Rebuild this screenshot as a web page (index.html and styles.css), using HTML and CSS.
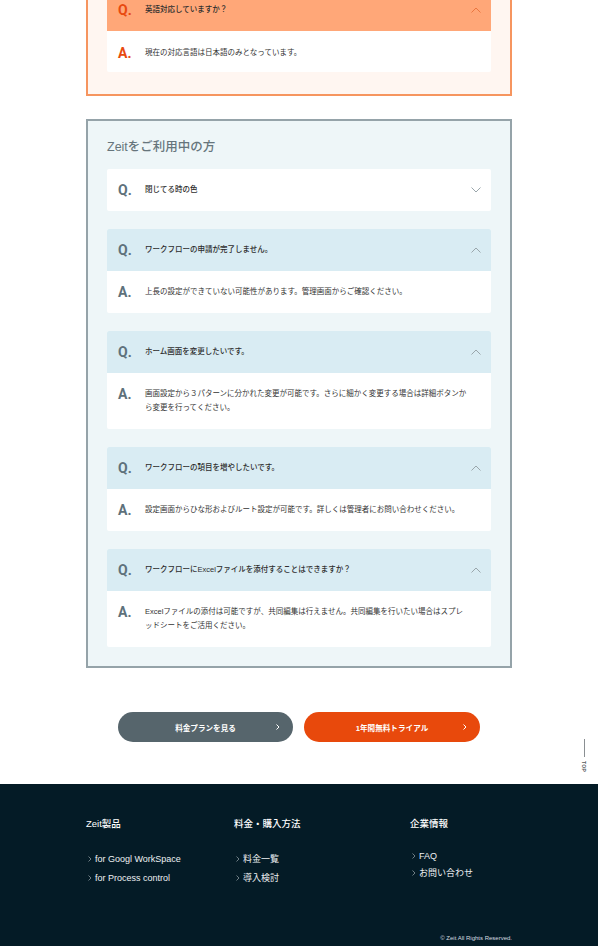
FILE: index.html
```html
<!DOCTYPE html>
<html lang="ja">
<head>
<meta charset="utf-8">
<title>FAQ</title>
<link rel="stylesheet" href="styles.css">
</head>
<body>
<main class="page">
  <section class="faq faq--orange">
    <div class="qa qa--open">
      <div class="qa__q">
        <span class="qa__mark">Q.</span>
        <span class="qa__text">英語対応していますか？</span>
        <svg class="qa__chev" width="10" height="6" viewBox="0 0 10 6"><polyline points="0.5,5.5 5,1 9.5,5.5"/></svg>
      </div>
      <div class="qa__a">
        <span class="qa__mark">A.</span>
        <p class="qa__text">現在の対応言語は日本語のみとなっています。</p>
      </div>
    </div>
  </section>

  <section class="faq faq--blue">
    <h2 class="faq__title">Zeitをご利用中の方</h2>
    <div class="faq__list">
      <div class="qa">
        <div class="qa__q">
          <span class="qa__mark">Q.</span>
          <span class="qa__text">閉じてる時の色</span>
          <svg class="qa__chev" width="10" height="6" viewBox="0 0 10 6"><polyline points="0.5,0.5 5,5 9.5,0.5"/></svg>
        </div>
      </div>
      <div class="qa qa--open">
        <div class="qa__q">
          <span class="qa__mark">Q.</span>
          <span class="qa__text">ワークフローの申請が完了しません。</span>
          <svg class="qa__chev" width="10" height="6" viewBox="0 0 10 6"><polyline points="0.5,5.5 5,1 9.5,5.5"/></svg>
        </div>
        <div class="qa__a">
          <span class="qa__mark">A.</span>
          <p class="qa__text">上長の設定ができていない可能性があります。管理画面からご確認ください。</p>
        </div>
      </div>
      <div class="qa qa--open">
        <div class="qa__q">
          <span class="qa__mark">Q.</span>
          <span class="qa__text">ホーム画面を変更したいです。</span>
          <svg class="qa__chev" width="10" height="6" viewBox="0 0 10 6"><polyline points="0.5,5.5 5,1 9.5,5.5"/></svg>
        </div>
        <div class="qa__a">
          <span class="qa__mark">A.</span>
          <p class="qa__text">画面設定から３パターンに分かれた変更が可能です。さらに細かく変更する場合は詳細ボタンから変更を行ってください。</p>
        </div>
      </div>
      <div class="qa qa--open">
        <div class="qa__q">
          <span class="qa__mark">Q.</span>
          <span class="qa__text">ワークフローの項目を増やしたいです。</span>
          <svg class="qa__chev" width="10" height="6" viewBox="0 0 10 6"><polyline points="0.5,5.5 5,1 9.5,5.5"/></svg>
        </div>
        <div class="qa__a">
          <span class="qa__mark">A.</span>
          <p class="qa__text">設定画面からひな形およびルート設定が可能です。詳しくは管理者にお問い合わせください。</p>
        </div>
      </div>
      <div class="qa qa--open">
        <div class="qa__q">
          <span class="qa__mark">Q.</span>
          <span class="qa__text">ワークフローにExcelファイルを添付することはできますか？</span>
          <svg class="qa__chev" width="10" height="6" viewBox="0 0 10 6"><polyline points="0.5,5.5 5,1 9.5,5.5"/></svg>
        </div>
        <div class="qa__a">
          <span class="qa__mark">A.</span>
          <p class="qa__text">Excelファイルの添付は可能ですが、共同編集は行えません。共同編集を行いたい場合はスプレッドシートをご活用ください。</p>
        </div>
      </div>
    </div>
  </section>

  <div class="cta">
    <a class="btn btn--gray" href="#">料金プランを見る<svg class="btn__chev" width="4" height="6" viewBox="0 0 4 6"><polyline points="0.5,0.5 3,3 0.5,5.5"/></svg></a>
    <a class="btn btn--orange" href="#">1年間無料トライアル<svg class="btn__chev" width="4" height="6" viewBox="0 0 4 6"><polyline points="0.5,0.5 3,3 0.5,5.5"/></svg></a>
    <a class="pagetop" href="#"><span class="pagetop__line"></span><span class="pagetop__text">TOP</span></a>
  </div>
</main>

<footer class="footer">
  <div class="footer__inner">
    <div class="footer__grid">
      <div class="footer__col">
        <h3 class="footer__heading">Zeit製品</h3>
        <ul class="footer__list">
          <li><a class="footer__link" href="#"><svg class="footer__chev" width="4" height="6" viewBox="0 0 4 6"><polyline points="0.5,0.5 3,3 0.5,5.5"/></svg>for Googl WorkSpace</a></li>
          <li><a class="footer__link" href="#"><svg class="footer__chev" width="4" height="6" viewBox="0 0 4 6"><polyline points="0.5,0.5 3,3 0.5,5.5"/></svg>for Process control</a></li>
        </ul>
      </div>
      <div class="footer__col">
        <h3 class="footer__heading">料金・購入方法</h3>
        <ul class="footer__list">
          <li><a class="footer__link" href="#"><svg class="footer__chev" width="4" height="6" viewBox="0 0 4 6"><polyline points="0.5,0.5 3,3 0.5,5.5"/></svg>料金一覧</a></li>
          <li><a class="footer__link" href="#"><svg class="footer__chev" width="4" height="6" viewBox="0 0 4 6"><polyline points="0.5,0.5 3,3 0.5,5.5"/></svg>導入検討</a></li>
        </ul>
      </div>
      <div class="footer__col">
        <h3 class="footer__heading">企業情報</h3>
        <ul class="footer__list footer__list--tight">
          <li><a class="footer__link" href="#"><svg class="footer__chev" width="4" height="6" viewBox="0 0 4 6"><polyline points="0.5,0.5 3,3 0.5,5.5"/></svg>FAQ</a></li>
          <li><a class="footer__link" href="#"><svg class="footer__chev" width="4" height="6" viewBox="0 0 4 6"><polyline points="0.5,0.5 3,3 0.5,5.5"/></svg>お問い合わせ</a></li>
        </ul>
      </div>
    </div>
    <p class="footer__copy">© Zeit All Rights Reserved.</p>
  </div>
</footer>
</body>
</html>
```

FILE: styles.css
```css
* { box-sizing: border-box; }

html { background: #ffffff; }

body {
  margin: 0;
  font-family: "Liberation Sans", "Noto Sans CJK JP", sans-serif;
  color: #333333;
  background: #ffffff;
}

a { text-decoration: none; color: inherit; }

.page {
  width: 426px;
  margin: 0 auto;
}

/* FAQ boxes */
.faq {
  border: 2px solid;
  padding: 0 19px 19px;
}

.faq--orange {
  margin-top: -13px;
  border-color: #f6955f;
  background: #fff6f1;
  padding-bottom: 22px;
}

.faq--blue {
  margin-top: 23px;
  border-color: #95a3a9;
  background: #eef6f8;
}

.faq__title {
  margin: 0 0 13px;
  padding-top: 17px;
  font-size: 12.5px;
  line-height: 18px;
  font-weight: 500;
  color: #66757c;
}

.faq__list {
  display: flex;
  flex-direction: column;
  gap: 18px;
}

.qa {
  background: #ffffff;
  border-radius: 2px;
  overflow: hidden;
}

.qa__q {
  display: flex;
  align-items: center;
  height: 42px;
  padding: 0 10px 0 11px;
}

.faq--blue .qa--open .qa__q { background: #d9ecf3; }
.faq--orange .qa__q { background: #ffa778; }

.qa__a {
  display: flex;
  align-items: flex-start;
  padding: 14px 22px 14px 11px;
}

.faq--orange .qa__a { padding-top: 15px; padding-bottom: 12px; }

.qa__mark {
  flex: none;
  width: 27px;
  font-family: "Liberation Sans Narrow", Roboto, "Liberation Sans", sans-serif;
  font-weight: 700;
  font-size: 14px;
  line-height: 14px;
  color: #5e717b;
}

.faq--orange .qa__mark { color: #e84a10; }

.qa__text {
  flex: 1;
  margin: 0;
  font-size: 7.5px;
  line-height: 14px;
  color: #333333;
  line-break: loose;
}

.qa__q .qa__text { font-weight: 500; color: #2e2e2e; }

.qa__chev {
  flex: none;
  fill: none;
  stroke: #9aa6ab;
  stroke-width: 1;
}

.faq--orange .qa__chev { stroke: #ea7640; }

/* CTA */
.cta {
  position: relative;
  display: flex;
  justify-content: center;
  gap: 11px;
  margin-top: 44px;
}

.btn {
  position: relative;
  width: 175px;
  height: 30px;
  border-radius: 15px;
  display: flex;
  align-items: center;
  justify-content: center;
  font-size: 7.6px;
  font-weight: 700;
  color: #ffffff;
}

.btn--gray { background: #56656c; }
.btn--orange { background: #e8490c; width: 176px; }

.btn__chev {
  position: absolute;
  right: 13px;
  top: 12px;
  fill: none;
  stroke: #ffffff;
  stroke-width: 1;
}

.pagetop {
  position: absolute;
  left: 492px;
  top: 27px;
  display: flex;
  flex-direction: column;
  align-items: center;
  gap: 4px;
  width: 12px;
}

.pagetop__line {
  display: block;
  width: 1px;
  height: 18px;
  background: #8a8f92;
}

.pagetop__text {
  writing-mode: vertical-rl;
  font-size: 5px;
  font-weight: 700;
  letter-spacing: 0.3px;
  color: #555a5d;
}

/* Footer */
.footer {
  margin-top: 42px;
  height: 162px;
  background: #041b26;
  padding-top: 33px;
}

.footer__inner {
  width: 426px;
  margin: 0 auto;
}

.footer__grid {
  display: grid;
  grid-template-columns: 148px 176px 1fr;
}

.footer__heading {
  margin: 0 0 21px;
  font-size: 9.5px;
  line-height: 14px;
  font-weight: 500;
  color: #ffffff;
}

.footer__list {
  list-style: none;
  margin: 0;
  padding: 0;
  display: flex;
  flex-direction: column;
  gap: 5px;
}

.footer__list--tight {
  margin-top: -3px;
  gap: 3px;
}

.footer__link {
  display: flex;
  align-items: center;
  gap: 3px;
  padding-left: 2px;
  font-size: 9px;
  line-height: 14px;
  color: #eef1f3;
}

.footer__chev {
  flex: none;
  fill: none;
  stroke: #8a979d;
  stroke-width: 0.8;
}

.footer__copy {
  margin: 49px 0 0;
  text-align: right;
  font-size: 6px;
  line-height: 8px;
  color: #d8dde0;
}
```
